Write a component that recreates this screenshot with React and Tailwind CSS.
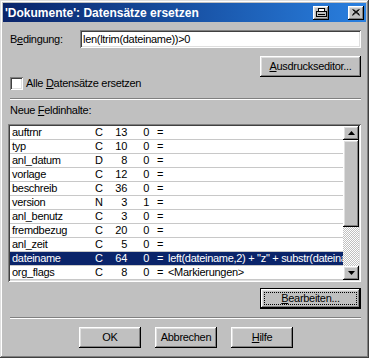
import React from 'react';

const rows = [
  ['auftrnr', 'C', '13', '0', ''],
  ['typ', 'C', '10', '0', ''],
  ['anl_datum', 'D', '8', '0', ''],
  ['vorlage', 'C', '12', '0', ''],
  ['beschreib', 'C', '36', '0', ''],
  ['version', 'N', '3', '1', ''],
  ['anl_benutz', 'C', '3', '0', ''],
  ['fremdbezug', 'C', '20', '0', ''],
  ['anl_zeit', 'C', '5', '0', ''],
  ['dateiname', 'C', '64', '0', 'left(dateiname,2) + "z" + substr(dateiname,3)'],
  ['org_flags', 'C', '8', '0', '<Markierungen>'],
];

const raised =
  'bg-[#c0c0c0] shadow-[inset_-1px_-1px_#000,inset_1px_1px_#fff,inset_-2px_-2px_#808080,inset_2px_2px_#dfdfdf]';
const sunken =
  'shadow-[inset_1px_1px_#808080,inset_-1px_-1px_#fff,inset_2px_2px_#404040,inset_-2px_-2px_#dfdfdf]';

const Button = ({ children, className = '' }) => (
  <div className={`${raised} h-[21px] flex items-center justify-center ${className}`}>{children}</div>
);

const Separator = () => (
  <div className="ml-[2px] h-[2px] border-t border-[#808080] border-b border-b-white" />
);

const ArrowBox = ({ up }) => (
  <div className={`${raised} h-[14px] flex items-center justify-center`}>
    <svg width="7" height="4" viewBox="0 0 7 4">
      {up ? <path d="M3.5 0 L7 4 L0 4 Z" fill="#000" /> : <path d="M0 0 L7 0 L3.5 4 Z" fill="#000" />}
    </svg>
  </div>
);

export default function App() {
  return (
    <div
      className="w-[369px] h-[358px] bg-[#c0c0c0] p-[3px] text-[11px] tracking-[-0.3px] text-black shadow-[inset_-1px_-1px_#404040,inset_1px_1px_#dfdfdf,inset_-2px_-2px_#808080,inset_2px_2px_#fff] overflow-hidden"
      style={{ fontFamily: '"Liberation Sans", Arial, sans-serif' }}
    >
      {/* title bar */}
      <div className="h-[19px] bg-gradient-to-r from-[#0a246a] to-[#2a80e0] flex items-center pl-[2px] pr-[2px]">
        <span className="text-white font-bold text-[12px] tracking-normal flex-1">'Dokumente': Datensätze ersetzen</span>
        <div className={`${raised} w-[16px] h-[14px] flex items-center justify-center`}>
          <svg width="11" height="9" viewBox="0 0 11 9">
            <rect x="2.5" y="0.5" width="6" height="3" fill="#fff" stroke="#000" />
            <rect x="0.5" y="3.5" width="10" height="5" fill="#c0c0c0" stroke="#000" />
            <path d="M2 6.5 H9" stroke="#000" />
          </svg>
        </div>
        <div className={`${raised} w-[16px] h-[14px] ml-[19px] flex items-center justify-center`}>
          <svg width="8" height="7" viewBox="0 0 8 7">
            <path d="M0.5 0.5 L7.5 6.5 M1.5 0.5 L7.5 5.5 M7.5 0.5 L0.5 6.5 M6.5 0.5 L0.5 5.5" stroke="#000" strokeWidth="1" />
          </svg>
        </div>
      </div>

      <div className="flex flex-col pl-[5px] pr-[5px]">
        <div className="mt-[8px] h-[18px] flex items-center">
          <span className="w-[72px] pl-[2px]">
            B<u>e</u>dingung:
          </span>
          <div className={`flex-1 h-[18px] bg-white ${sunken} flex items-center pl-[3px]`}>len(ltrim(dateiname))&gt;0</div>
        </div>

        <div className="mt-[8px] flex justify-end">
          <Button className="w-[101px]">
            <u>A</u>usdruckseditor...
          </Button>
        </div>

        <div className="h-[13px] flex items-center pl-[2px]">
          <div className={`w-[13px] h-[13px] bg-white ${sunken}`} />
          <span className="ml-[3px]">
            Alle <u>D</u>atensätze ersetzen
          </span>
        </div>

        <div className="mt-[8px]">
          <Separator />
        </div>

        <div className="mt-[4px] h-[13px] leading-[13px] pl-[2px]">
          Neue <u>F</u>eldinhalte:
        </div>

        <div className={`mt-[7px] h-[158px] bg-white ${sunken} p-[2px] flex`}>
          <div className="flex-1 flex flex-col overflow-hidden">
            {rows.map((r, i) => {
              const sel = i === 9;
              return (
                <div
                  key={r[0]}
                  className={`h-[14px] shrink-0 flex items-center whitespace-nowrap border-b border-[#c8c8c8] ${
                    sel ? 'bg-[#0a246a] text-white' : ''
                  }`}
                >
                  <span className="w-[85px] pl-[2px] shrink-0">{r[0]}</span>
                  <span className="w-[10px] shrink-0">{r[1]}</span>
                  <span className="w-[22px] shrink-0 text-right">{r[2]}</span>
                  <span className="w-[22px] shrink-0 text-right">{r[3]}</span>
                  <span className="w-[19px] shrink-0 pl-[8px]">=</span>
                  <span className="shrink-0">{r[4]}</span>
                </div>
              );
            })}
          </div>
          <div className="w-[16px] flex flex-col">
            <ArrowBox up />
            <div className={`${raised} h-[87px]`} />
            <div className="flex-1 bg-[repeating-conic-gradient(#c0c0c0_0%_25%,#fff_0%_50%)] bg-[length:2px_2px]" />
            <ArrowBox />
          </div>
        </div>

        <div className="mt-[6px] flex justify-end">
          <div className="w-[101px] h-[21px] border border-black">
            <div className="h-full bg-[#c0c0c0] shadow-[inset_-1px_-1px_#000,inset_1px_1px_#fff,inset_-2px_-2px_#808080,inset_2px_2px_#dfdfdf] p-[3px]">
              <div className="h-full border border-dotted border-black flex items-center justify-center">
                <u>B</u>earbeiten...
              </div>
            </div>
          </div>
        </div>

        <div className="mt-[8px]">
          <Separator />
        </div>

        <div className="mt-[8px] flex justify-center gap-[14px] pl-[3px]">
          <Button className="w-[62px]">OK</Button>
          <Button className="w-[62px]">Abbrechen</Button>
          <Button className="w-[62px]">
            <u>H</u>ilfe
          </Button>
        </div>
      </div>
    </div>
  );
}
